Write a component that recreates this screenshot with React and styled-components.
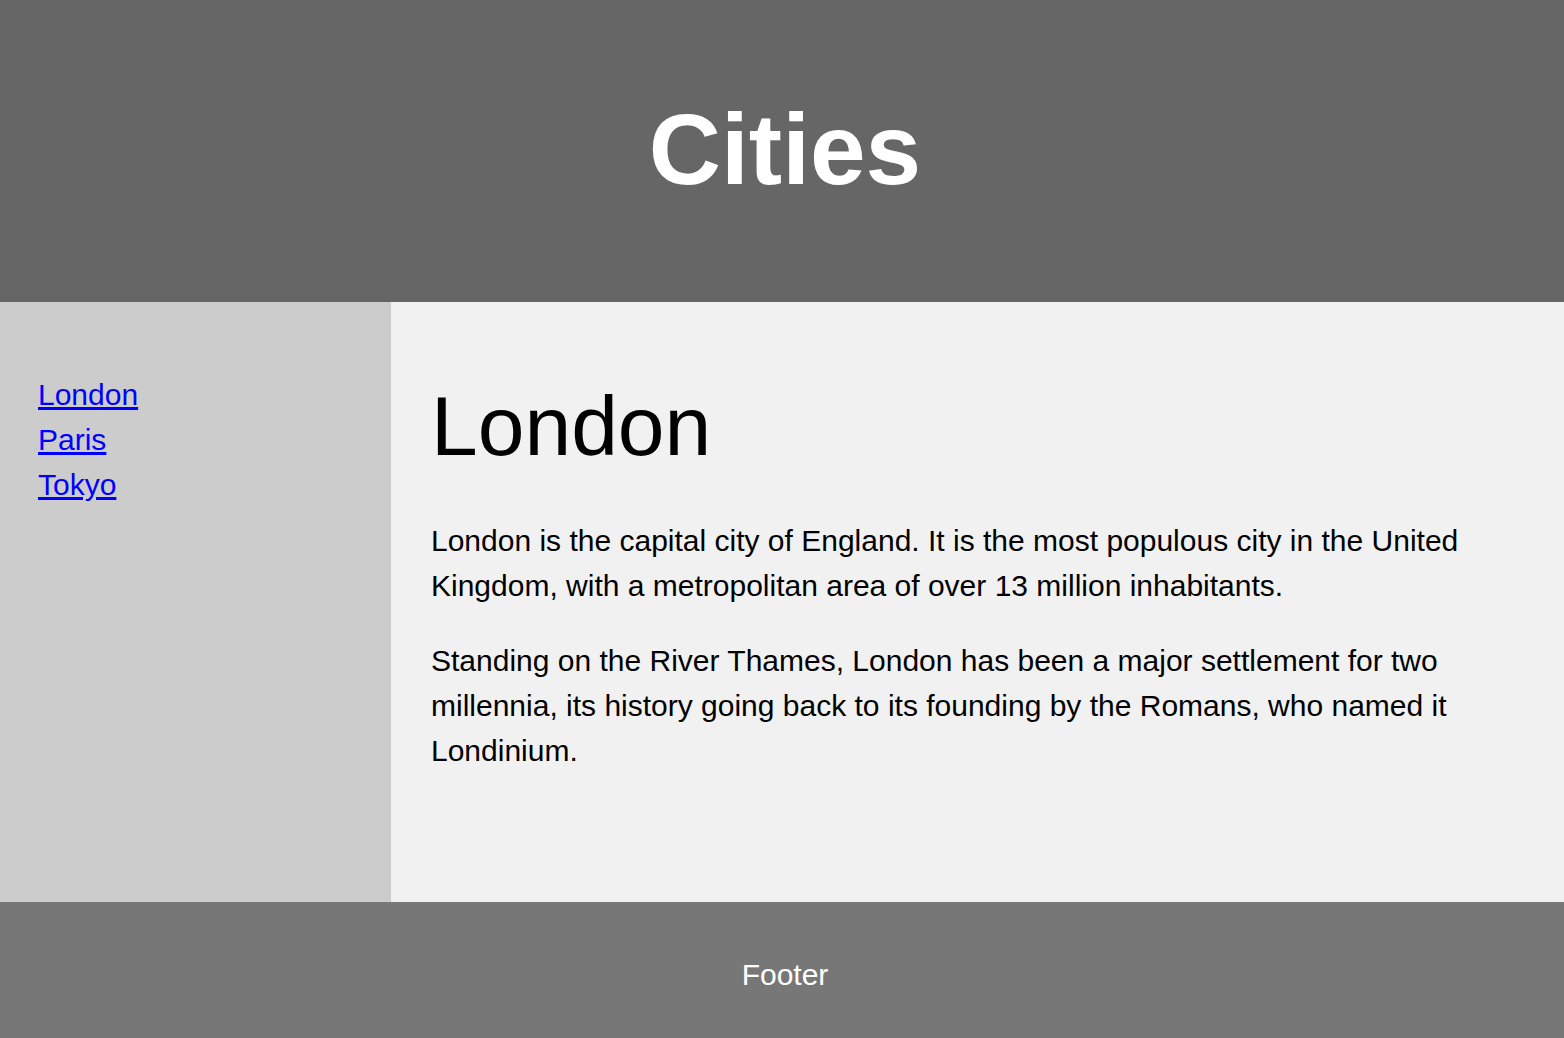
import styled, { createGlobalStyle } from "styled-components";

const GlobalStyle = createGlobalStyle`
  * { box-sizing: border-box; }
  html, body {
    margin: 0;
    padding: 0;
    font-family: "Liberation Sans", Arial, Helvetica, sans-serif;
  }
`;

const Page = styled.div`
  display: flex;
  flex-direction: column;
  min-height: 1038px;
`;

const Header = styled.header`
  background: #666;
  color: #fff;
  text-align: center;
  padding: 92px 0 95px 6px;
`;

const Title = styled.h2`
  margin: 0;
  font-size: 100px;
  font-weight: 700;
  line-height: 115px;
`;

const Section = styled.section`
  display: flex;
  height: 600px;
`;

const Nav = styled.nav`
  width: 25%;
  background: #ccc;
  padding: 40px 38px;
`;

const NavList = styled.ul`
  list-style: none;
  margin: 30px 0;
  padding: 0;
  font-size: 30px;
  line-height: 45px;
`;

const NavLink = styled.a`
  color: #00f;
  text-decoration: underline;
`;

const Article = styled.article`
  flex: 1;
  background: #f1f1f1;
  padding: 40px 40px;
`;

const Heading = styled.h1`
  margin: 36px 0 44px;
  font-size: 84px;
  font-weight: 400;
  line-height: 96px;
`;

const Para = styled.p`
  margin: 30px 0;
  font-size: 30px;
  line-height: 45px;
  color: #000;
`;

const Footer = styled.footer`
  flex: 1;
  background: #777;
  color: #fff;
  text-align: center;
  font-size: 30px;
  line-height: 45px;
  padding: 50px 0 41px 6px;
`;

const cities = ["London", "Paris", "Tokyo"];

export default function App() {
  return (
    <Page>
      <GlobalStyle />
      <Header>
        <Title>Cities</Title>
      </Header>
      <Section>
        <Nav>
          <NavList>
            {cities.map((c) => (
              <li key={c}>
                <NavLink href="#">{c}</NavLink>
              </li>
            ))}
          </NavList>
        </Nav>
        <Article>
          <Heading>London</Heading>
          <Para>
            London is the capital city of England. It is the most populous city
            in the United Kingdom, with a metropolitan area of over 13 million
            inhabitants.
          </Para>
          <Para>
            Standing on the River Thames, London has been a major settlement for
            two millennia, its history going back to its founding by the Romans,
            who named it Londinium.
          </Para>
        </Article>
      </Section>
      <Footer>Footer</Footer>
    </Page>
  );
}
